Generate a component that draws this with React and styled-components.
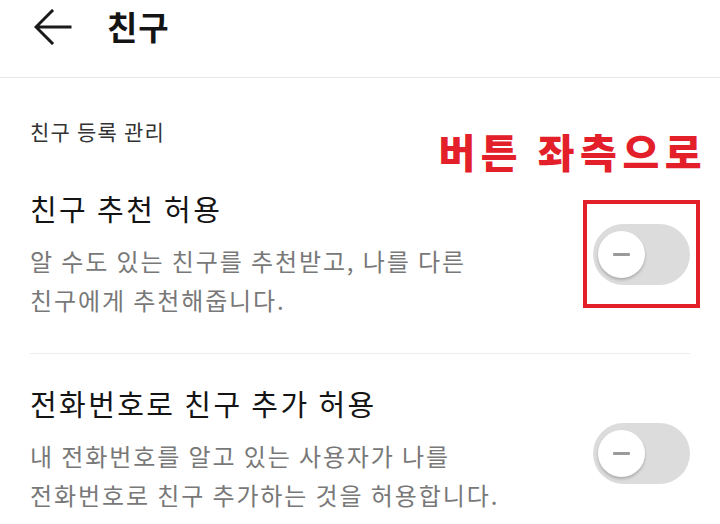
import React from "react";
import styled, { createGlobalStyle } from "styled-components";

const Global = createGlobalStyle`
  html, body { margin: 0; padding: 0; background: #ffffff; }
  body { font-family: "Noto Sans CJK KR", "Noto Sans", sans-serif; }
`;

const Screen = styled.div`
  width: 720px;
  height: 524px;
  overflow: hidden;
  background: #ffffff;
  position: relative;
`;

const Header = styled.header`
  height: 78px;
  box-sizing: border-box;
  padding: 0 0 24px 34px;
  display: flex;
  align-items: center;
  border-bottom: 1px solid #e6e6e6;
`;

const BackButton = styled.button`
  border: 0;
  background: none;
  padding: 0;
  width: 38px;
  height: 36px;
  display: flex;
  align-items: center;
  color: #1a1a1a;
`;

const Title = styled.h1`
  margin: 0 0 0 35px;
  font-size: 33px;
  font-weight: 700;
  color: #141414;
  line-height: 1;
  letter-spacing: 1px;
`;

const Body = styled.main`
  padding: 0 30px;
`;

const SectionLabel = styled.div`
  margin-top: 39px;
  font-size: 21px;
  line-height: 28px;
  color: #333333;
  letter-spacing: 1.2px;
`;

const Row = styled.section`
  display: flex;
  align-items: center;
  justify-content: space-between;
  padding: ${(p) => p.$pad};
  border-top: ${(p) => (p.$divided ? "1px solid #ececec" : "0")};
`;

const Texts = styled.div`
  display: flex;
  flex-direction: column;
`;

const RowTitle = styled.div`
  font-size: 29px;
  line-height: 36px;
  color: #141414;
  letter-spacing: 2.4px;
`;

const RowDesc = styled.div`
  margin-top: 15px;
  font-size: 24px;
  line-height: 39px;
  color: #787878;
  letter-spacing: 1.9px;
`;

const ToggleWrap = styled.div`
  position: relative;
  margin-top: ${(p) => p.$shift}px;
`;

const Track = styled.div`
  width: 97px;
  height: 61px;
  border-radius: 31px;
  background: #dcdcdc;
  display: flex;
  align-items: center;
  padding-left: 5px;
  box-sizing: border-box;
`;

const Knob = styled.div`
  width: 47px;
  height: 47px;
  border-radius: 50%;
  background: #ffffff;
  box-shadow: 0 2px 3px rgba(0, 0, 0, 0.22);
  display: flex;
  align-items: center;
  justify-content: center;

  &::after {
    content: "";
    width: 17px;
    height: 3px;
    border-radius: 1px;
    background: #9a9a9a;
  }
`;

/* red call-out marks drawn over the first switch */
const MarkBox = styled.div`
  position: absolute;
  left: -10px;
  top: -24px;
  width: 117px;
  height: 108px;
  box-sizing: border-box;
  border: 4px solid #e3202a;
  pointer-events: none;
`;

const MarkText = styled.div`
  position: absolute;
  right: -17px;
  top: -93px;
  white-space: nowrap;
  font-family: "Noto Sans CJK KR", sans-serif;
  font-size: 40px;
  font-weight: 900;
  line-height: 1;
  color: #e3202a;
  letter-spacing: 5.5px;
`;

function Toggle({ shift = 0, marked }) {
  return (
    <ToggleWrap $shift={shift}>
      <Track>
        <Knob />
      </Track>
      {marked && (
        <>
          <MarkBox />
          <MarkText>버튼 좌측으로</MarkText>
        </>
      )}
    </ToggleWrap>
  );
}

export default function App() {
  return (
    <Screen>
      <Global />
      <Header>
        <BackButton aria-label="뒤로">
          <svg width="38" height="36" viewBox="0 0 38 36" fill="none">
            <path
              d="M36 18H3M18 2L2 18l16 16"
              stroke="currentColor"
              strokeWidth="3"
              strokeLinecap="square"
            />
          </svg>
        </BackButton>
        <Title>친구</Title>
      </Header>
      <Body>
        <SectionLabel>친구 등록 관리</SectionLabel>
        <Row $pad="45px 0 34px">
          <Texts>
            <RowTitle>친구 추천 허용</RowTitle>
            <RowDesc>
              알 수도 있는 친구를 추천받고, 나를 다른
              <br />
              친구에게 추천해줍니다.
            </RowDesc>
          </Texts>
          <Toggle shift={0} marked />
        </Row>
        <Row $divided $pad="31px 0 20px">
          <Texts>
            <RowTitle>전화번호로 친구 추가 허용</RowTitle>
            <RowDesc>
              내 전화번호를 알고 있는 사용자가 나를
              <br />
              전화번호로 친구 추가하는 것을 허용합니다.
            </RowDesc>
          </Texts>
          <Toggle shift={7} />
        </Row>
      </Body>
    </Screen>
  );
}
